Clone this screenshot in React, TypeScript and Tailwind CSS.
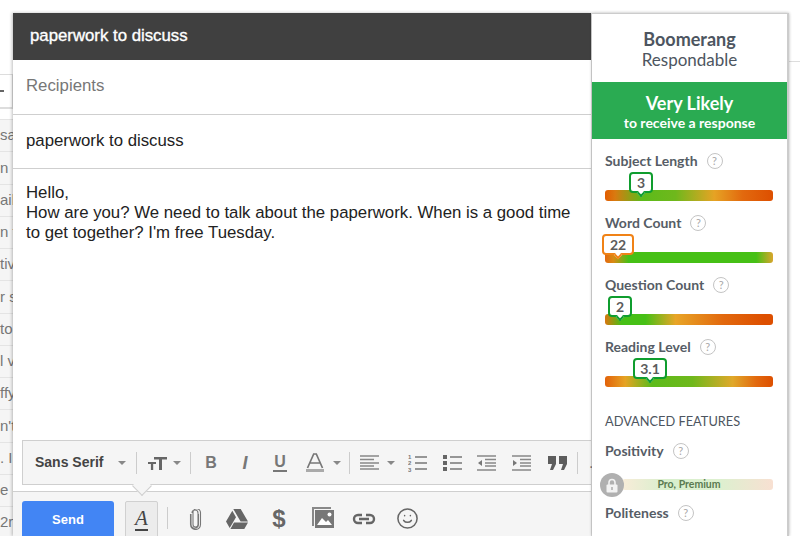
import { Smile } from 'lucide-react';

const inboxRows = ['sa', 'n', 'ail', 'n t', 'tiv', 'r s', 'to', 'l v', 'ffy', "n't", '. I', 'e i', '2r'];

const gauges = [
  {
    label: 'Subject Length',
    value: '3',
    left: 24,
    width: 24,
    border: 'border-[#0f9d2e]',
    bar: 'bg-[linear-gradient(90deg,#e25c00_0%,#d97a10_6%,#5cbb1a_22%,#6fb81c_42%,#e6a324_65%,#e2690e_82%,#dd4f00_100%)]',
  },
  {
    label: 'Word Count',
    value: '22',
    left: -3,
    width: 32,
    border: 'border-[#f08216]',
    bar: 'bg-[linear-gradient(90deg,#e2690e_0%,#d98a14_5%,#46c016_14%,#46c016_90%,#d9a52c_100%)]',
  },
  {
    label: 'Question Count',
    value: '2',
    left: 3,
    width: 24,
    border: 'border-[#0f9d2e]',
    bar: 'bg-[linear-gradient(90deg,#d9760f_0%,#46c016_10%,#46c016_24%,#e8a527_42%,#e2690e_70%,#dd4f00_95%)]',
  },
  {
    label: 'Reading Level',
    value: '3.1',
    left: 28,
    width: 34,
    border: 'border-[#0f9d2e]',
    bar: 'bg-[linear-gradient(90deg,#e2620a_0%,#e6a324_12%,#5cbb1a_28%,#6fb81c_52%,#e0a82a_76%,#e2690e_90%,#dd4f00_100%)]',
  },
];

function HelpDot() {
  return (
    <span className="ml-[9px] flex h-[16px] w-[16px] items-center justify-center rounded-full border-[1.5px] border-[#c4c4c4] text-[11px] font-normal leading-none text-[#a8a8a8]">
      ?
    </span>
  );
}

function Gauge({ label, value, left, width, border, bar }: (typeof gauges)[number]) {
  return (
    <div className="h-[62px]">
      <div className="flex h-[21px] items-center text-[14px] font-bold text-[#565d66]">
        {label}
        <HelpDot />
      </div>
      <div className={`relative mt-[19px] h-[11px] rounded-[3px] ${bar}`}>
        <div
          className={`absolute bottom-[8px] flex h-[21px] items-center justify-center rounded-[4px] border-[2.5px] bg-white text-[14px] font-bold text-[#5c5c5c] ${border}`}
          style={{ left, width }}
        >
          {value}
          <span className={`absolute bottom-[-5px] left-1/2 h-[6px] w-[6px] -translate-x-1/2 rotate-45 border-b-[2px] border-r-[2px] bg-white ${border}`} />
        </div>
      </div>
    </div>
  );
}

function Caret({ className = '' }: { className?: string }) {
  return <span className={`h-0 w-0 shrink-0 border-x-[4px] border-t-[4px] border-x-transparent border-t-[#888] ${className}`} />;
}

function Sep({ className = '' }: { className?: string }) {
  return <span className={`h-[22px] w-px shrink-0 bg-[#ccc] ${className}`} />;
}

function Toolbar() {
  return (
    <div className="relative z-10 ml-[9px] flex h-[45px] shrink-0 items-center border border-r-0 border-[#cfcfcf] bg-[#f5f5f5] pl-[12px] text-[#666]">
      <span className="w-[71px] shrink-0 whitespace-nowrap text-[14px] font-bold text-[#444]">Sans Serif</span>
      <Caret className="ml-[12px]" />
      <Sep className="ml-[10px]" />
      <svg width="19" height="16" viewBox="0 0 19 16" className="ml-[11px] shrink-0">
        <path d="M6 2h13v2.600h-5V15h-3V4.600H6zM0 7h8v2H5.200v6H2.900V9H0z" fill="#666" />
      </svg>
      <Caret className="ml-[6px]" />
      <Sep className="ml-[9px]" />
      <span className="ml-[14px] w-[12px] shrink-0 text-center text-[16px] font-bold leading-none text-[#777]">B</span>
      <span className="ml-[22px] w-[12px] shrink-0 text-center text-[18px] font-bold italic leading-none text-[#777]">I</span>
      <span className="ml-[22px] w-[14px] shrink-0 border-b-[2px] border-[#777] text-center text-[16px] font-bold leading-[16px] text-[#777]">U</span>
      <svg width="18" height="19" viewBox="0 0 18 19" className="ml-[19px] shrink-0">
        <path d="M1.500 15 7.700 1h2.600l6.200 14M4 10h10" fill="none" stroke="#777" strokeWidth="1.700" />
        <rect x="0" y="16" width="18" height="3" fill="#aaa" />
      </svg>
      <Caret className="ml-[9px]" />
      <Sep className="ml-[8px]" />
      <svg width="19" height="15" viewBox="0 0 19 15" className="ml-[10px] shrink-0">
        <path d="M0 1h19M0 4.500h14M0 8h19M0 11h14M0 14h19" stroke="#888" strokeWidth="1.400" />
      </svg>
      <Caret className="ml-[8px]" />
      <svg width="19" height="18" viewBox="0 0 19 18" className="ml-[13px] shrink-0">
        <path d="M7 3h12M7 9h12M7 15h12" stroke="#777" strokeWidth="1.400" />
        <text x="0" y="5" fontSize="6" fontWeight="700" fill="#777" fontFamily="Liberation Sans">1</text>
        <text x="0" y="11" fontSize="6" fontWeight="700" fill="#777" fontFamily="Liberation Sans">2</text>
        <text x="0" y="17.500" fontSize="6" fontWeight="700" fill="#777" fontFamily="Liberation Sans">3</text>
      </svg>
      <svg width="19" height="18" viewBox="0 0 19 18" className="ml-[16px] shrink-0">
        <path d="M7 3h12M7 9h12M7 15h12" stroke="#777" strokeWidth="1.400" />
        <rect x="0" y="1" width="4" height="4" fill="#666" />
        <rect x="0" y="7" width="4" height="4" fill="#666" />
        <rect x="0" y="13" width="4" height="4" fill="#666" />
      </svg>
      <svg width="19" height="16" viewBox="0 0 19 16" className="ml-[15px] shrink-0">
        <path d="M0 1h19M8 4.500h11M8 8h11M8 11h11M0 15h19" stroke="#888" strokeWidth="1.400" />
        <path d="M5 5v6L1 8z" fill="#777" />
      </svg>
      <svg width="19" height="16" viewBox="0 0 19 16" className="ml-[16px] shrink-0">
        <path d="M0 1h19M8 4.500h11M8 8h11M8 11h11M0 15h19" stroke="#888" strokeWidth="1.400" />
        <path d="M1 5v6l4-3z" fill="#777" />
      </svg>
      <svg width="19" height="14" viewBox="0 0 19 14" className="ml-[17px] shrink-0">
        <path d="M0 0h8v8l-3 6H2l2-6H0zM11 0h8v8l-3 6h-3l2-6h-4z" fill="#5c5c5c" />
      </svg>
      <Sep className="ml-[10px]" />
      <span className="ml-[11px] text-[#777]">.</span>
      {/* little arrow joining the format bar to the A button */}
      <span className="absolute bottom-[-9px] left-[112px] h-[14px] w-[14px] rotate-45 border-b border-r border-[#cfcfcf] bg-[#f5f5f5]" />
    </div>
  );
}

function BottomBar() {
  return (
    <div className="mt-[6px] flex min-h-0 flex-1 items-start border-t border-[#cfcfcf] bg-[#f5f5f5] pl-[9px] pt-[9px] text-[#666]">
      <button className="flex h-[40px] w-[92px] shrink-0 items-center justify-center rounded-[3px] bg-[#4285f4] pb-[2px] text-[13px] font-bold text-white">
        Send
      </button>
      <div className="ml-[11px] flex h-[40px] w-[33px] shrink-0 items-start justify-center rounded-[2px] border border-[#d0d0d0] bg-[#ececec] pt-[5px]">
        <span className="border-b-[2px] border-[#444] text-[21px] italic leading-[22px] text-[#444] font-['Liberation_Serif',serif]">A</span>
      </div>
      <span className="ml-[9px] mt-[6px] h-[22px] w-px shrink-0 bg-[#ccc]" />
      <svg width="13" height="21" viewBox="0 0 13 21" className="ml-[21px] mt-[8px] shrink-0">
        <path d="M4 5v10.500a2.500 2.500 0 0 0 5 0V4a3 3 0 0 0-6 0M9.500 5v10.500a3.500 3.500 0 0 1-7.500 0V5M4 5V3.500a3.200 3.200 0 0 1 7.500 0v12a5 5 0 0 1-10 0V5" fill="none" stroke="#777" strokeWidth="1.100" />
      </svg>
      <svg width="22" height="20" viewBox="0 0 22 20" className="ml-[24px] mt-[8px] shrink-0">
        <path d="M7.300 0h7.400l7.300 12.600h-7.400zM6.300 1.700 10 8.200 3.700 19 0 12.600zM8 13.500h14L18.300 20H4.400z" fill="#666" />
      </svg>
      <span className="ml-[24px] mt-[4px] w-[14px] shrink-0 text-center text-[24px] font-bold leading-[27px] text-[#666]">$</span>
      <svg width="22" height="21" viewBox="0 0 22 21" className="ml-[26px] mt-[6px] shrink-0">
        <path d="M0 0h19v2H2v17H0z" fill="#888" />
        <path d="M3 3h19v18H3z" fill="#777" />
        <path d="m5 18 5-7 4 4 2-2 4 5z" fill="#fff" />
        <circle cx="17.500" cy="7.500" r="2" fill="#fff" />
      </svg>
      <svg width="24" height="12" viewBox="0 0 24 12" className="ml-[18px] mt-[12px] shrink-0">
        <path d="M10 2H6a4 4 0 0 0 0 8h4M14 2h4a4 4 0 0 1 0 8h-4M7 6h10" fill="none" stroke="#666" strokeWidth="2.400" />
      </svg>
      <Smile className="ml-[20px] mt-[6px] h-[23px] w-[23px] shrink-0 text-[#666]" strokeWidth={1.6} />
    </div>
  );
}

export default function App() {
  return (
    <div className="flex h-[536px] w-[800px] overflow-hidden bg-white font-['Liberation_Sans',sans-serif]">
      {/* gmail inbox peeking out from behind the compose window */}
      <div className="w-[13px] shrink-0 pt-[62px]">
        <div className="h-[47px] border-b border-[#ddd] pt-[12px]">
          <div className="flex h-[34px] items-center border border-l-0 border-[#ddd] text-[#555]">
            <span className="h-[2px] w-[4px] bg-[#666]" />
          </div>
        </div>
        <div className="h-[11px] border-b border-[#e4e4e4]" />
        {inboxRows.map((text, i) => (
          <div key={i} className="flex h-[32.250px] items-center justify-start overflow-hidden whitespace-nowrap border-b border-[#e4e4e4] bg-[#f5f5f5] text-[15px] text-[#777]">
            <span className="shrink-0">{text}</span>
          </div>
        ))}
      </div>

      {/* compose window */}
      <div className="z-10 mt-[13px] flex w-[579px] shrink-0 flex-col border-r border-[#ddd] bg-white shadow-[-1px_0_3px_rgba(0,0,0,0.25)]">
        <div className="flex h-[47px] shrink-0 items-center bg-[#404040] pb-[2px] pl-[17px] text-[16.800px] text-white [-webkit-text-stroke:0.35px_white]">
          paperwork to discuss
        </div>
        <div className="flex h-[55px] shrink-0 items-center border-b border-[#cfcfcf] pb-[2px] pl-[13px] text-[16.800px] text-[#777]">
          Recipients
        </div>
        <div className="flex h-[54px] shrink-0 items-center border-b border-[#cfcfcf] pb-[2px] pl-[13px] text-[16.800px] text-[#222]">
          paperwork to discuss
        </div>
        <div className="h-[271px] shrink-0 pl-[13px] pr-[12px] pt-[14px] text-[16.800px] leading-[20px] text-[#222]">
          <div>Hello,</div>
          <div>How are you? We need to talk about the paperwork. When is a good time to get together? I'm free Tuesday.</div>
        </div>
        <Toolbar />
        <BottomBar />
      </div>

      {/* respondable sidebar */}
      <div className="z-20 mt-[13px] w-[197px] shrink-0 border-r-2 border-t border-[#ccc] bg-white font-['Lato',sans-serif] shadow-[0_0_3px_rgba(0,0,0,0.3)]">
        <div className="flex h-[68px] flex-col items-center justify-center pt-[1px] text-[#4d5560]">
          <div className="text-[18px] font-bold leading-[22px]">Boomerang</div>
          <div className="text-[17px] leading-[20px]">Respondable</div>
        </div>
        <div className="flex h-[57px] flex-col items-center justify-center bg-[#2aab52] pt-[2px] text-white">
          <div className="text-[18px] font-bold leading-[22px]">Very Likely</div>
          <div className="text-[14px] font-bold leading-[18px]">to receive a response</div>
        </div>
        <div className="pl-[13px] pr-[14px] pt-[11px]">
          {gauges.map((g) => (
            <Gauge key={g.label} {...g} />
          ))}
          <div className="mt-[13px] text-[12.800px] leading-[20px] text-[#4d5560]">ADVANCED FEATURES</div>
          <div className="mt-[9px] flex h-[21px] items-center text-[14px] font-bold text-[#565d66]">
            Positivity
            <HelpDot />
          </div>
          <div className="relative ml-[17px] mt-[18px] flex h-[11px] items-center justify-center rounded-[3px] bg-[linear-gradient(90deg,#f8ecd8_0%,#d8efcd_30%,#ddf0cf_65%,#f8e0d2_100%)] pr-[17px] text-[10.500px] font-bold text-[#5a7a50]">
            Pro, Premium
            <span className="absolute left-[-22px] top-[-6px] flex h-[24px] w-[24px] items-center justify-center rounded-full bg-[#b0b0b0]">
              <svg width="12" height="15" viewBox="0 0 12 15">
                <path d="M3 7V4.500a3 3 0 0 1 6 0V7" fill="none" stroke="#f2f2f2" strokeWidth="1.600" />
                <rect x="0.500" y="6.500" width="11" height="8" rx="1" fill="#f2f2f2" />
                <rect x="5.200" y="9" width="1.600" height="3" fill="#b0b0b0" />
              </svg>
            </span>
          </div>
          <div className="mt-[12px] flex h-[21px] items-center text-[14px] font-bold text-[#565d66]">
            Politeness
            <HelpDot />
          </div>
        </div>
      </div>

      {/* page edge to the right of the sidebar */}
      <div className="flex-1 pt-[61px]">
        <div className="h-px bg-[#ddd]" />
      </div>
    </div>
  );
}
